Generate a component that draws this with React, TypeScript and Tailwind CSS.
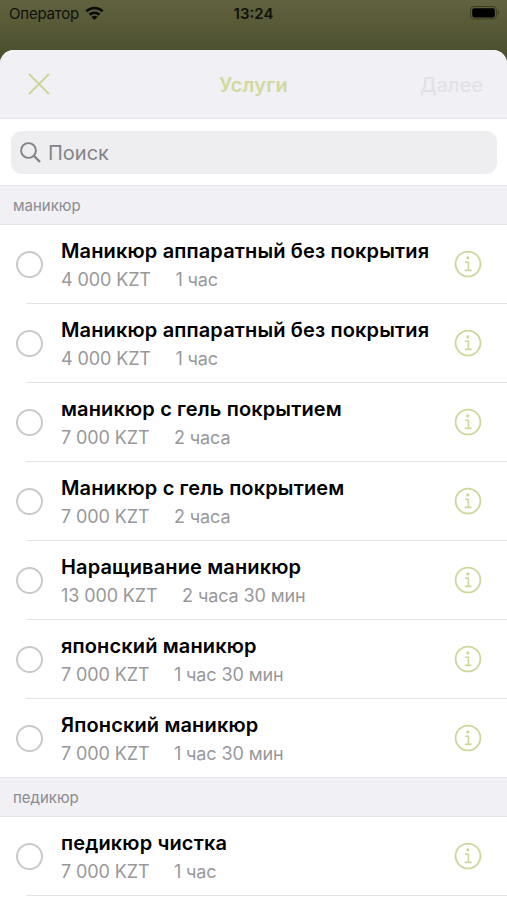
import { useState } from 'react';

interface Service {
  id: number;
  name: string;
  price: string;
  duration: string;
}

interface Section {
  title: string;
  services: Service[];
}

const sections: Section[] = [
  {
    title: 'маникюр',
    services: [
      { id: 1, name: 'Маникюр аппаратный без покрытия', price: '4 000 KZT', duration: '1 час' },
      { id: 2, name: 'Маникюр аппаратный без покрытия', price: '4 000 KZT', duration: '1 час' },
      { id: 3, name: 'маникюр с гель покрытием', price: '7 000 KZT', duration: '2 часа' },
      { id: 4, name: 'Маникюр с гель покрытием', price: '7 000 KZT', duration: '2 часа' },
      { id: 5, name: 'Наращивание маникюр', price: '13 000 KZT', duration: '2 часа 30 мин' },
      { id: 6, name: 'японский маникюр', price: '7 000 KZT', duration: '1 час 30 мин' },
      { id: 7, name: 'Японский маникюр', price: '7 000 KZT', duration: '1 час 30 мин' },
    ],
  },
  {
    title: 'педикюр',
    services: [{ id: 8, name: 'педикюр чистка', price: '7 000 KZT', duration: '1 час' }],
  },
];

function WifiIcon() {
  return (
    <svg width="19" height="15" viewBox="0 0 20 15" fill="none" stroke="#0b0c05" strokeWidth="2.7" className="-translate-y-px">
      <path d="M1.4 5.2a12.2 12.2 0 0 1 17.2 0" />
      <path d="M4.8 8.8a7.4 7.4 0 0 1 10.4 0" />
      <path d="M10 14.4l-3.2-3.2a4.4 4.4 0 0 1 6.4 0z" fill="#0b0c05" stroke="none" />
    </svg>
  );
}

function BatteryIcon() {
  return (
    <svg width="30" height="14" viewBox="0 0 30 14" className="translate-x-[2px]">
      <rect x="0.5" y="0.5" width="26" height="12.5" rx="3.5" fill="none" stroke="#3b3e22" />
      <rect x="2.2" y="2.2" width="22.6" height="9.2" rx="1.8" fill="#000" />
      <path d="M28 4.6c1.6.6 1.6 3.6 0 4.2z" fill="#3b3e22" />
    </svg>
  );
}

function InfoIcon() {
  return (
    <svg width="28" height="28" viewBox="0 0 28 28" fill="none" stroke="#cfd69c">
      <circle cx="14" cy="14" r="12.4" strokeWidth="1.8" />
      <circle cx="13.8" cy="7.9" r="1.6" fill="#cfd69c" stroke="none" />
      <path d="M11 12.2h3.4v8M10.8 20.4h6.8" strokeWidth="1.6" />
    </svg>
  );
}

function ServiceRow({ service }: { service: Service }) {
  const [selected, setSelected] = useState(false);

  return (
    <div className="flex h-[79px] flex-col">
      <div className="flex h-[78px] items-center pl-[16px] pr-[25px]">
        <button
          onClick={() => setSelected(!selected)}
          className={`mt-px h-[27px] w-[27px] shrink-0 rounded-full border-2 border-[#c9c9c9] ${selected ? 'bg-[#cdd596]' : ''}`}
        />
        <div className="ml-[18px] min-w-0 flex-1 pt-[3px] whitespace-nowrap">
          <p className="text-[20px] leading-[28px] font-semibold tracking-[0.14px] text-black">{service.name}</p>
          <div className="flex gap-[24.5px] pt-px text-[18px] leading-[28px] tracking-[-0.11px] text-[#98989a]">
            <span>{service.price}</span>
            <span>{service.duration}</span>
          </div>
        </div>
        <button className="shrink-0">
          <InfoIcon />
        </button>
      </div>
      <div className="ml-[26px] h-px shrink-0 bg-[#e3e3e5]" />
    </div>
  );
}

export default function App() {
  return (
    <div className="h-[900px] w-full overflow-hidden bg-[#4e5130] font-['Inter',sans-serif]">
      <div className="grid h-[50px] grid-cols-3 items-start bg-linear-to-b from-[#61623f] to-[#4e5130] px-[9px] text-[#10110a]">
        <div className="flex items-center gap-[6px] pt-[5px]">
          <span className="text-[15px] leading-[18px] tracking-[-0.2px]">Оператор</span>
          <WifiIcon />
        </div>
        <span className="pt-[5px] text-center text-[15px] leading-[18px] font-semibold">13:24</span>
        <div className="flex justify-end pt-[6px]">
          <BatteryIcon />
        </div>
      </div>

      <div className="h-[850px] overflow-hidden rounded-t-[14px] bg-white">
        <div className="grid h-[69px] grid-cols-3 items-center border-b border-[#e4e4e8] bg-[#f0f0f5] px-[24px]">
          <button className="w-fit pl-[4px]">
            <svg width="22" height="22" viewBox="0 0 22 22" stroke="#cdd596" strokeWidth="1.8">
              <path d="M1 1l20 20M21 1L1 21" />
            </svg>
          </button>
          <h1 className="pt-px text-center text-[20px] font-semibold tracking-[0.2px] text-[#d2d99f]">Услуги</h1>
          <button className="pt-px text-right text-[20px] font-medium text-[#e2e2e6]">Далее</button>
        </div>

        <div className="h-[67px] pr-[10px] pl-[11px] pt-[12px]">
          <div className="flex h-[43px] items-center gap-[7px] rounded-[11px] bg-[#eeeef0] pl-[9px]">
            <svg width="21" height="21" viewBox="0 0 21 21" fill="none" stroke="#838387" strokeWidth="1.9">
              <circle cx="8.5" cy="8.5" r="7.4" />
              <path d="M13.8 13.8l6.2 6.2" strokeWidth="2.3" />
            </svg>
            <span className="pt-px text-[20px] text-[#838387]">Поиск</span>
          </div>
        </div>

        {sections.map((section) => (
          <div key={section.title}>
            {/* header overlaps the separator of the row above it */}
            <div className="relative -mt-px flex h-[40px] items-center border-y border-[#e6e6ea] bg-[#f0f0f5] pt-[3px] pl-[13px] text-[15px] text-[#8b8b90]">
              {section.title}
            </div>
            {section.services.map((service) => (
              <ServiceRow key={service.id} service={service} />
            ))}
          </div>
        ))}
      </div>
    </div>
  );
}
